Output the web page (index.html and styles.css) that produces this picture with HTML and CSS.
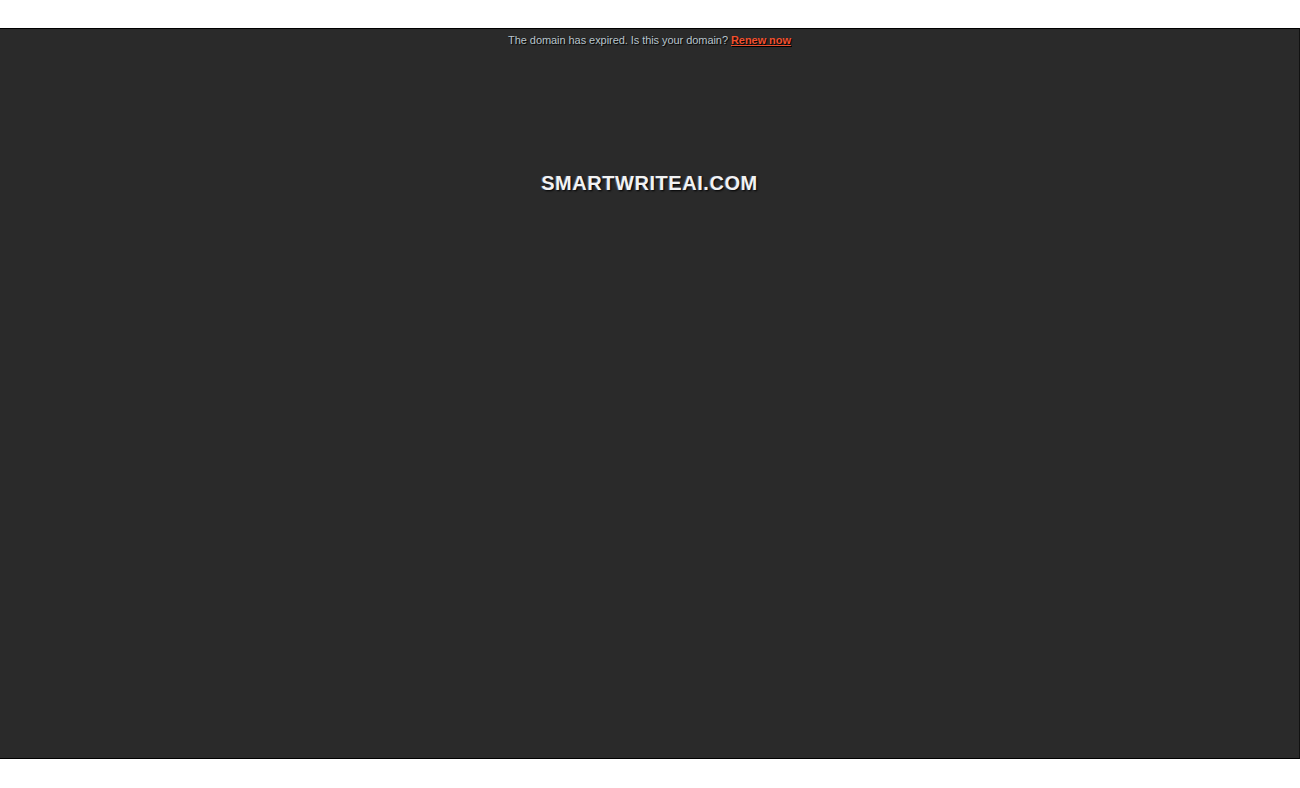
FILE: index.html
```html
<!DOCTYPE html>
<html>
<head>
<meta charset="utf-8">
<link rel="stylesheet" href="styles.css">
</head>
<body>
<div class="page">
  <div class="frame">
    <p class="notice">The domain has expired. Is this your domain? <a class="renew" href="#">Renew now</a></p>
    <h1 class="domain">SMARTWRITEAI.COM</h1>
  </div>
</div>
</body>
</html>
```
FILE: styles.css
```css
html, body {
  margin: 0;
  padding: 0;
  background: #ffffff;
}
.page {
  padding-top: 28px;
}
.frame {
  height: 729px;
  background: #2a2a2a;
  border-top: 1px solid #000;
  border-bottom: 1px solid #000;
  border-right: 1px solid #111;
  display: flex;
  flex-direction: column;
  align-items: center;
  font-family: "Liberation Sans", Arial, sans-serif;
}
.notice {
  margin: 5px 0 0;
  font-size: 11px;
  line-height: 13px;
  letter-spacing: -0.06px;
  color: #b8c4cc;
  text-shadow: 1px 1px 1px #000;
}
.renew {
  color: #f0502f;
  font-weight: bold;
  text-decoration: underline;
}
.domain {
  margin: 125px 0 0;
  font-size: 20px;
  line-height: 22px;
  font-weight: bold;
  color: #f2f2f2;
  letter-spacing: 0.55px;
  text-shadow: 1px 1px 2px #000, -1px 0 1px rgba(120,160,255,0.5);
}
```
